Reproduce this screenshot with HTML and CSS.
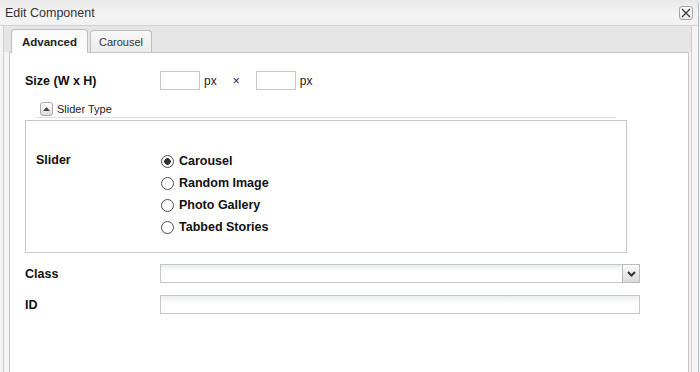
FILE: index.html
```html
<!DOCTYPE html>
<html lang="en">
<head>
    <meta charset="UTF-8">
    <title>Edit Component</title>
    <link rel="stylesheet" href="styles.css">
</head>
<body>
<div class="dialog">
    <div class="titlebar">
        <span class="title">Edit Component</span>
        <button class="close" aria-label="Close">
            <svg width="10" height="10" viewBox="0 0 10 10"><path d="M1 1L9 9M9 1L1 9" stroke="#333" stroke-width="1.1" fill="none"/></svg>
        </button>
    </div>
    <div class="frame">
        <div class="tabstrip">
            <div class="tab active">Advanced</div>
            <div class="tab">Carousel</div>
        </div>
        <div class="panel">
            <div class="row">
                <label class="label">Size (W x H)</label>
                <input class="num" type="text">
                <span class="unit">px</span>
                <span class="times">&times;</span>
                <input class="num" type="text">
                <span class="unit">px</span>
            </div>

            <div class="legend">
                <button class="toggle" aria-label="Collapse">
                    <svg width="7" height="4" viewBox="0 0 7 4"><path d="M0 4L3.5 0L7 4Z" fill="#444"/></svg>
                </button>
                <span>Slider Type</span>
            </div>
            <div class="group">
                <div class="label group-label">Slider</div>
                <div class="options">
                    <label class="option"><input type="radio" name="slider" checked>Carousel</label>
                    <label class="option"><input type="radio" name="slider">Random Image</label>
                    <label class="option"><input type="radio" name="slider">Photo Gallery</label>
                    <label class="option"><input type="radio" name="slider">Tabbed Stories</label>
                </div>
            </div>

            <div class="row field-row">
                <label class="label">Class</label>
                <div class="select">
                    <span class="arrow">
                        <svg width="9" height="6" viewBox="0 0 9 6"><path d="M1 1L4.5 4.5L8 1" stroke="#333" stroke-width="2" fill="none"/></svg>
                    </span>
                </div>
            </div>
            <div class="row id-row">
                <label class="label">ID</label>
                <input class="text" type="text">
            </div>
        </div>
    </div>
</div>
</body>
</html>
```

FILE: styles.css
```css
html, body{
    margin: 0;
    height: 100%;
}
body{
    background: #f4f4f4;
    font-family: "Liberation Sans", Arial, sans-serif;
    font-size: 11px;
    color: #222;
    overflow: hidden;
}
.dialog{
    width: 698px;
    height: 372px;
    border-right: 1px solid #a9c3c7;
    border-top-right-radius: 4px;
    background: #f4f4f4;
    display: flex;
    flex-direction: column;
    overflow: hidden;
}

/* title bar */
.titlebar{
    height: 25px;
    flex: none;
    display: flex;
    align-items: center;
    justify-content: space-between;
    padding: 0 5px 0 5px;
    border-bottom: 1px solid #d2d2d2;
    background: linear-gradient(#e9e9e9, #f5f5f5 60%, #f1f1f1);
}
.title{
    font-size: 12.5px;
    color: #333;
}
.close{
    box-sizing: border-box;
    width: 14px;
    height: 14px;
    margin-top: 1px;
    padding: 0;
    border: 1px solid #a5a5a5;
    border-radius: 3px;
    background: linear-gradient(#fdfdfd, #ececec);
    display: flex;
    align-items: center;
    justify-content: center;
}

/* tabs */
.frame{
    flex: 1;
    min-height: 0;
    margin: 0 6px 0 3px;
    border-left: 1px solid #cdcdcd;
    border-right: 1px solid #cdcdcd;
    display: flex;
    flex-direction: column;
}
.tabstrip{
    height: 26px;
    flex: none;
    display: flex;
    align-items: flex-end;
    gap: 2px;
    padding-left: 7px;
    background: #e6e6e6;
}
.tab{
    box-sizing: border-box;
    height: 22px;
    padding: 0 8px;
    border: 1px solid #bdbdbd;
    border-bottom: none;
    border-radius: 4px 4px 0 0;
    background: linear-gradient(#f8f8f8, #ebebeb);
    display: flex;
    align-items: center;
    font-size: 11px;
    color: #333;
}
.tab.active{
    position: relative;
    height: 24px;
    margin-bottom: -1px;
    padding: 0 10px;
    background: linear-gradient(#f9f9f9, #fff);
    font-weight: bold;
    font-size: 11.5px;
    color: #222;
}
.panel{
    flex: 1;
    margin: 0 2px 0 5px;
    padding: 18px 0 0 15px;
    border: 1px solid #c4c4c4;
    border-bottom: none;
    background: #fff;
}

/* rows */
.row{
    display: flex;
    align-items: center;
}
.label{
    width: 135px;
    flex: none;
    font-weight: bold;
    font-size: 12.5px;
    color: #111;
}
.num{
    box-sizing: border-box;
    width: 40px;
    height: 19px;
    margin: 0;
    padding: 0;
    border: 1px solid #c8c8c8;
}
.unit{
    margin: 0 0 0 4px;
    font-size: 12px;
}
.times{
    margin: 0 16px 0 16px;
    font-size: 12px;
}

/* slider type section */
.legend{
    box-sizing: border-box;
    width: 580px;
    height: 17px;
    margin: 11px 0 0 11px;
    padding-left: 4px;
    border-bottom: 1px solid #dedede;
    display: flex;
    align-items: center;
    gap: 4px;
}
.toggle{
    box-sizing: border-box;
    width: 13px;
    height: 14px;
    padding: 0;
    border: 1px solid #a9a9a9;
    border-radius: 3px;
    background: linear-gradient(#fff, #dcdcdc);
    display: flex;
    align-items: center;
    justify-content: center;
}
.group{
    box-sizing: border-box;
    width: 602px;
    height: 133px;
    margin-top: 2px;
    padding: 29px 0 0 10px;
    border: 1px solid #c8c8c8;
    display: flex;
}
.group-label{
    width: 125px;
    line-height: 20px;
}
.options{
    display: flex;
    flex-direction: column;
}
.option{
    height: 22px;
    display: flex;
    align-items: center;
    font-weight: bold;
    font-size: 12.5px;
    color: #111;
}
.option input{
    appearance: none;
    -webkit-appearance: none;
    box-sizing: border-box;
    width: 13px;
    height: 13px;
    margin: 0 5px 0 0;
    border: 1px solid #4d4d4d;
    border-radius: 50%;
    background: #fff;
}
.option input:checked{
    background: radial-gradient(circle, #333 0, #333 3px, #fff 3.6px);
}

/* class / id */
.field-row{
    margin-top: 11px;
}
.id-row{
    margin-top: 12px;
}
.select, .text{
    box-sizing: border-box;
    width: 480px;
    height: 19px;
    margin: 0;
    padding: 0;
    border: 1px solid #c6c6c6;
    background: linear-gradient(#eceeee, #fff 7px);
}
.select{
    display: flex;
    justify-content: flex-end;
}
.arrow{
    box-sizing: border-box;
    width: 18px;
    height: 19px;
    margin: -1px -1px -1px 0;
    border: 1px solid #bbb;
    background: linear-gradient(#fbfbfb, #dadada);
    display: flex;
    align-items: center;
    justify-content: center;
}
```
